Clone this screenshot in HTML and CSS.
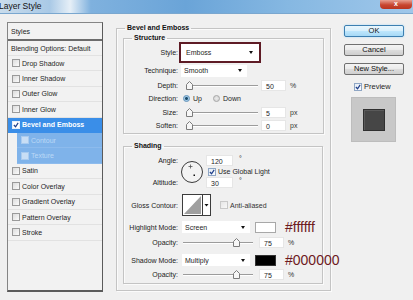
FILE: index.html
```html
<!DOCTYPE html>
<html lang="en">
<head>
    <meta charset="UTF-8">
    <meta name="viewport" content="width=device-width, initial-scale=1.0">
    <title>Layer Style</title>
    <link rel="stylesheet" href="styles.css">
</head>
<body>
    <div class="dialog">
        <div class="titlebar">
            <span class="title">Layer Style</span>
            <span class="close">x</span>
        </div>
        <div class="content">
            <div class="styles-list">
                <div class="list-head">Styles</div>
                <div class="list-item blend">Blending Options: Default</div>
                <div class="list-item"><span class="cb"></span>Drop Shadow</div>
                <div class="list-item"><span class="cb"></span>Inner Shadow</div>
                <div class="list-item"><span class="cb"></span>Outer Glow</div>
                <div class="list-item"><span class="cb"></span>Inner Glow</div>
                <div class="list-item selected"><span class="cb checked"><svg viewBox="0 0 7 7"><path d="M1 3.5 L3 5.5 L6 1" /></svg></span>Bevel and Emboss</div>
                <div class="list-item sub"><span class="cb"></span>Contour</div>
                <div class="list-item sub"><span class="cb"></span>Texture</div>
                <div class="list-item"><span class="cb"></span>Satin</div>
                <div class="list-item"><span class="cb"></span>Color Overlay</div>
                <div class="list-item"><span class="cb"></span>Gradient Overlay</div>
                <div class="list-item"><span class="cb"></span>Pattern Overlay</div>
                <div class="list-item"><span class="cb"></span>Stroke</div>
            </div>

            <div class="main">
                <fieldset class="group outer">
                    <legend>Bevel and Emboss</legend>

                    <fieldset class="group structure">
                        <legend>Structure</legend>
                        <div class="frow r-style">
                            <span class="lbl">Style:</span>
                            <div class="select select-style"><span>Emboss</span><i class="caret"></i></div>
                        </div>
                        <div class="frow r-tech">
                            <span class="lbl">Technique:</span>
                            <div class="select select-tech"><span>Smooth</span><i class="caret"></i></div>
                        </div>
                        <div class="frow r-depth">
                            <span class="lbl">Depth:</span>
                            <div class="ctl">
                                <div class="slider">
                                    <svg class="thumb" viewBox="0 0 7 9"><path d="M0.5 8.5 V3.5 L3.5 0.5 L6.5 3.5 V8.5 Z" /></svg>
                                </div>
                                <span class="num">50</span><span class="unit">%</span>
                            </div>
                        </div>
                        <div class="frow r-dir">
                            <span class="lbl">Direction:</span>
                            <div class="ctl">
                                <span class="radio on"></span><span class="radio-lbl">Up</span>
                                <span class="radio"></span><span class="radio-lbl">Down</span>
                            </div>
                        </div>
                        <div class="frow r-size">
                            <span class="lbl">Size:</span>
                            <div class="ctl">
                                <div class="slider">
                                    <svg class="thumb" viewBox="0 0 7 9"><path d="M0.5 8.5 V3.5 L3.5 0.5 L6.5 3.5 V8.5 Z" /></svg>
                                </div>
                                <span class="num">5</span><span class="unit">px</span>
                            </div>
                        </div>
                        <div class="frow r-soften">
                            <span class="lbl">Soften:</span>
                            <div class="ctl">
                                <div class="slider">
                                    <svg class="thumb" viewBox="0 0 7 9"><path d="M0.5 8.5 V3.5 L3.5 0.5 L6.5 3.5 V8.5 Z" /></svg>
                                </div>
                                <span class="num">0</span><span class="unit">px</span>
                            </div>
                        </div>
                    </fieldset>

                    <fieldset class="group shading">
                        <legend>Shading</legend>
                        <div class="angle-block">
                            <span class="lbl a-lbl">Angle:</span>
                            <svg class="dial" viewBox="0 0 22 22">
                                <circle cx="11" cy="11" r="10.5" />
                                <path class="cross" d="M7.5 5.5 H11.5 M9.5 3.5 V7.5" />
                                <rect x="12.5" y="13.5" width="1.5" height="1.5" />
                            </svg>
                            <div class="a-row"><span class="num wide">120</span><span class="deg">°</span></div>
                            <div class="a-check"><span class="cb checked"><svg viewBox="0 0 7 7"><path d="M1 3.5 L3 5.5 L6 1" /></svg></span>Use Global Light</div>
                            <span class="lbl b-lbl">Altitude:</span>
                            <div class="b-row"><span class="num wide">30</span><span class="deg">°</span></div>
                        </div>
                        <div class="frow r-gloss">
                            <span class="lbl">Gloss Contour:</span>
                            <div class="ctl">
                                <svg class="contour" viewBox="0 0 29 22">
                                    <rect class="c-frame" x="0.5" y="0.5" width="28" height="21" />
                                    <path class="c-fill" d="M2 20 L19 2 V20 Z" />
                                    <path class="c-line" d="M20.5 0.5 V21.5" />
                                    <path class="c-caret" d="M22.5 10 H26.5 L24.5 12.5 Z" />
                                </svg>
                                <span class="cb light"></span><span class="cb-lbl">Anti-aliased</span>
                            </div>
                        </div>
                        <div class="frow r-mode">
                            <span class="lbl">Highlight Mode:</span>
                            <div class="ctl">
                                <div class="select select-mode"><span>Screen</span><i class="caret"></i></div>
                                <span class="swatch white"></span>
                                <span class="hex">#ffffff</span>
                            </div>
                        </div>
                        <div class="frow r-op">
                            <span class="lbl">Opacity:</span>
                            <div class="ctl">
                                <div class="slider op">
                                    <svg class="thumb" style="left: 71%" viewBox="0 0 7 9"><path d="M0.5 8.5 V3.5 L3.5 0.5 L6.5 3.5 V8.5 Z" /></svg>
                                </div>
                                <span class="num">75</span><span class="unit">%</span>
                            </div>
                        </div>
                        <div class="frow r-mode2">
                            <span class="lbl">Shadow Mode:</span>
                            <div class="ctl">
                                <div class="select select-mode"><span>Multiply</span><i class="caret"></i></div>
                                <span class="swatch black"></span>
                                <span class="hex">#000000</span>
                            </div>
                        </div>
                        <div class="frow r-op2">
                            <span class="lbl">Opacity:</span>
                            <div class="ctl">
                                <div class="slider op">
                                    <svg class="thumb" style="left: 71%" viewBox="0 0 7 9"><path d="M0.5 8.5 V3.5 L3.5 0.5 L6.5 3.5 V8.5 Z" /></svg>
                                </div>
                                <span class="num">75</span><span class="unit">%</span>
                            </div>
                        </div>
                    </fieldset>
                </fieldset>
            </div>

            <div class="side">
                <button class="btn default">OK</button>
                <button class="btn">Cancel</button>
                <button class="btn">New Style...</button>
                <div class="preview-check"><span class="cb checked"><svg viewBox="0 0 7 7"><path d="M1 3.5 L3 5.5 L6 1" /></svg></span>Preview</div>
                <div class="preview-box"><div class="preview-swatch"></div></div>
            </div>
        </div>
    </div>
</body>
</html>
```
FILE: styles.css
```css
* {
    box-sizing: border-box;
}

body {
    margin: 0;
    background-color: #f0f0f0;
    font-family: 'Liberation Sans', Arial, sans-serif;
    font-size: 7px;
    color: #1e1e1e;
}

.dialog {
    width: 413px;
    height: 300px;
    overflow: hidden;
    background-color: #f0f0f0;
}

/* title bar */
.titlebar {
    height: 14px;
    display: flex;
    justify-content: space-between;
    background: linear-gradient(90deg, #c9dcec 0%, #a9c9e6 12%, #e6eff7 17%, #7fb1de 22%, #6aa4d8 45%, #86b8e2 70%, #9fc7ea 100%);
    border-bottom: 1px solid #7aa7cf;
}

.title {
    font-size: 8.5px;
    line-height: 12px;
    margin-left: -1px;
    color: #111;
}

.close {
    width: 32px;
    height: 9px;
    margin-right: 1px;
    background: linear-gradient(#e8a091, #c8452f 55%, #b93520);
    border-radius: 0 0 4px 4px;
    color: #fff;
    font-size: 7px;
    font-weight: bold;
    line-height: 8px;
    text-align: center;
}

.content {
    display: flex;
    align-items: flex-start;
    padding: 8px 0 0 7px;
}

/* styles list */
.styles-list {
    flex: none;
    width: 96px;
    height: 270px;
    border: 1px solid #858585;
    border-right-color: #5b5b5b;
    border-bottom: 2px solid #5b5b5b;
    background-color: #f2f2f2;
}

.list-head {
    height: 18px;
    line-height: 18px;
    padding-left: 3px;
    border-bottom: 2px solid #6c6c6c;
}

.list-item {
    display: flex;
    align-items: center;
    height: 15.4px;
    padding-left: 4px;
    border-bottom: 1px solid #e2e2e2;
    white-space: nowrap;
}

.list-item.blend {
    height: 15px;
    padding-left: 3px;
}

.list-item.selected {
    background-color: #3a8ee8;
    color: #fff;
    font-weight: bold;
    border-bottom-color: #3a8ee8;
}

.list-item.sub {
    margin-left: 9px;
    background-color: #7fb3ea;
    color: #bcd9f6;
    border-bottom-color: #8dbbed;
}

.cb {
    display: inline-flex;
    flex: none;
    width: 8px;
    height: 8px;
    margin-right: 2px;
    border: 1px solid #9a9a9a;
    background: linear-gradient(135deg, #dcdcdc, #fbfbfb);
}

.cb svg {
    width: 6px;
    height: 6px;
}

.cb svg path {
    fill: none;
    stroke: #1d3e8a;
    stroke-width: 1.4;
}

.list-item.selected .cb {
    background: #fff;
    border-color: #e8f1fb;
}

.list-item.sub .cb {
    background: #c8def5;
    border-color: #a9cbef;
}

/* main groups */
.main {
    flex: none;
    width: 215px;
    margin-left: 13px;
    margin-top: 2px;
}

fieldset.group {
    min-width: 0;
    margin: 0;
    border: 1px solid #c4c4c4;
    box-shadow: inset 1px 1px 0 #fbfbfb, 1px 1px 0 #fbfbfb;
}

fieldset.group legend {
    padding: 0 2px;
    margin-left: 8px;
    line-height: 8px;
    font-weight: bold;
    color: #111;
}

.outer {
    width: 215px;
    padding: 0 6px 6px 6px;
}

.outer > legend {
    margin-left: 2px !important;
}

.structure {
    width: 201px;
    margin-top: 2px !important;
    padding: 0 0 1px 0;
}

.shading {
    width: 200px;
    margin-top: 8px !important;
    padding: 0 0 3px 0;
}

.frow {
    display: grid;
    grid-template-columns: 54px 1fr;
    column-gap: 2px;
    align-items: center;
}

.lbl {
    text-align: right;
    white-space: nowrap;
    color: #222;
}

.ctl {
    display: flex;
    align-items: center;
}

.r-style { height: 21px; }
.r-tech { height: 15px; }
.r-depth { height: 14px; }
.r-dir { height: 13px; }
.r-size { height: 14px; }
.r-soften { height: 13px; }

/* dropdowns */
.select {
    display: flex;
    align-items: center;
    justify-content: space-between;
    background-color: #fff;
    padding: 0 5px 0 3px;
}

.select-style {
    width: 82px;
    height: 21px;
    margin-left: -1px;
    padding-left: 5px;
    padding-right: 6px;
    border: 2px solid #5e1b25;
}

.select-tech {
    width: 66px;
    height: 12px;
    margin-left: 1px;
}

.select-mode {
    width: 68px;
    height: 12px;
    margin-left: 2px;
}

.caret {
    width: 0;
    height: 0;
    border-left: 2.5px solid transparent;
    border-right: 2.5px solid transparent;
    border-top: 3px solid #111;
}

/* sliders */
.slider {
    position: relative;
    width: 72px;
    height: 9px;
    margin-left: 6px;
    background: linear-gradient(#f0f0f0 4px, #9c9c9c 4px, #9c9c9c 5px, #fff 5px, #fff 6px, #f0f0f0 6px);
}

.slider.op {
    width: 70px;
    margin-left: 3px;
}

.thumb {
    position: absolute;
    left: 0;
    top: 0;
    width: 7px;
    height: 9px;
}

.thumb path {
    fill: #f7f7f7;
    stroke: #7c7c7c;
    stroke-width: 1;
}

.num {
    width: 25px;
    height: 11px;
    margin-left: 3px;
    padding-left: 4px;
    line-height: 11px;
    background-color: #fff;
    border: 1px solid #e6e6e6;
}

.slider.op + .num {
    margin-left: 6px;
}

.unit {
    margin-left: 4px;
    color: #333;
}

/* radios */
.radio {
    width: 7px;
    height: 7px;
    margin-left: 3px;
    border-radius: 50%;
    border: 1px solid #a6a6a6;
    background: radial-gradient(#eaeaea, #d2d2d2);
}

.radio.on {
    border-color: #5d8fb8;
    background: radial-gradient(#1d4d6c 35%, #8fc0e2 45%, #dbe9f4 100%);
}

.radio-lbl {
    margin-left: 3px;
    margin-right: 8px;
}

/* angle */
.angle-block {
    display: grid;
    grid-template-columns: 54px 22px auto;
    grid-template-rows: 11px 11px 11px;
    margin-top: 5px;
    align-items: center;
}

.a-lbl { grid-column: 1; grid-row: 1; }
.b-lbl { grid-column: 1; grid-row: 3; }

.dial {
    grid-column: 2;
    grid-row: 1 / 4;
    width: 22px;
    height: 22px;
    margin-left: 3px;
}

.dial circle {
    fill: #f3f3f3;
    stroke: #3a3a3a;
    stroke-width: 1;
}

.dial .cross {
    stroke: #555;
    stroke-width: 0.8;
}

.dial rect {
    fill: #111;
}

.a-row, .b-row, .a-check {
    grid-column: 3;
    display: flex;
    align-items: center;
    margin-left: 6px;
}

.a-row { grid-row: 1; }
.a-check { grid-row: 2; margin-left: 8px; }
.b-row { grid-row: 3; }

.num.wide {
    width: 27px;
    margin-left: 0;
}

.deg {
    margin-left: 6px;
    margin-top: -4px;
}

.a-check .cb {
    border-color: #8fa6c4;
    background: linear-gradient(135deg, #e4ecf6, #fcfcfc);
}

/* gloss contour */
.r-gloss {
    height: 22px;
    margin-top: 6px;
}

.contour {
    width: 29px;
    height: 22px;
    margin-left: 2px;
}

.c-frame {
    fill: #fff;
    stroke: #3c3c3c;
}

.c-fill {
    fill: #9f9f9f;
}

.c-line {
    stroke: #3c3c3c;
}

.c-caret {
    fill: #111;
}

.cb.light {
    margin-left: 9px;
    border-color: #c9c9c9;
    background: linear-gradient(135deg, #e6e6e6, #f8f8f8);
}

.cb-lbl {
    color: #333;
}

/* modes */
.r-mode { height: 12px; margin-top: 5px; }
.r-op { height: 11px; margin-top: 4px; }
.r-mode2 { height: 12px; margin-top: 6px; }
.r-op2 { height: 11px; margin-top: 3px; }

.swatch {
    width: 21px;
    height: 11px;
    margin-left: 5px;
    border: 1px solid #a8a8a8;
}

.swatch.white { background-color: #fff; }
.swatch.black { background-color: #000; border-color: #333; }

.hex {
    margin-left: 9px;
    font-size: 14px;
    line-height: 12px;
    color: #6e1a1e;
    white-space: nowrap;
}

/* side buttons */
.side {
    display: flex;
    flex-direction: column;
    margin-left: 13px;
    margin-top: 3px;
}

.btn {
    width: 60px;
    height: 12px;
    margin: 0 0 7px 0;
    padding: 0;
    font-family: inherit;
    font-size: 7.5px;
    line-height: 10px;
    color: #111;
    border: 1px solid #707070;
    border-radius: 2px;
    background: linear-gradient(#f4f4f4 0%, #ebebeb 45%, #dddddd 50%, #cfcfcf 100%);
}

.btn.default {
    border-color: #3c7fb1;
    background: linear-gradient(#e9f6fd 0%, #d9f0fc 45%, #bee6fd 50%, #a7d9f5 100%);
    box-shadow: 0 0 2px #9fd6f5;
}

.preview-check {
    display: flex;
    align-items: center;
    height: 9px;
    margin-left: 10px;
    font-size: 7.5px;
}

.preview-check .cb {
    border-color: #8fa6c4;
    background: linear-gradient(135deg, #e4ecf6, #fcfcfc);
}

.preview-box {
    display: flex;
    align-items: center;
    justify-content: center;
    width: 45px;
    height: 45px;
    margin: 6px 0 0 7px;
    background-color: #c8c8c8;
    border: 1px solid #bdbdbd;
}

.preview-swatch {
    width: 22px;
    height: 22px;
    background-color: #464646;
    border: 1px solid #2f2f2f;
    box-shadow: inset 1px 1px 0 #5a5a5a;
}
```
